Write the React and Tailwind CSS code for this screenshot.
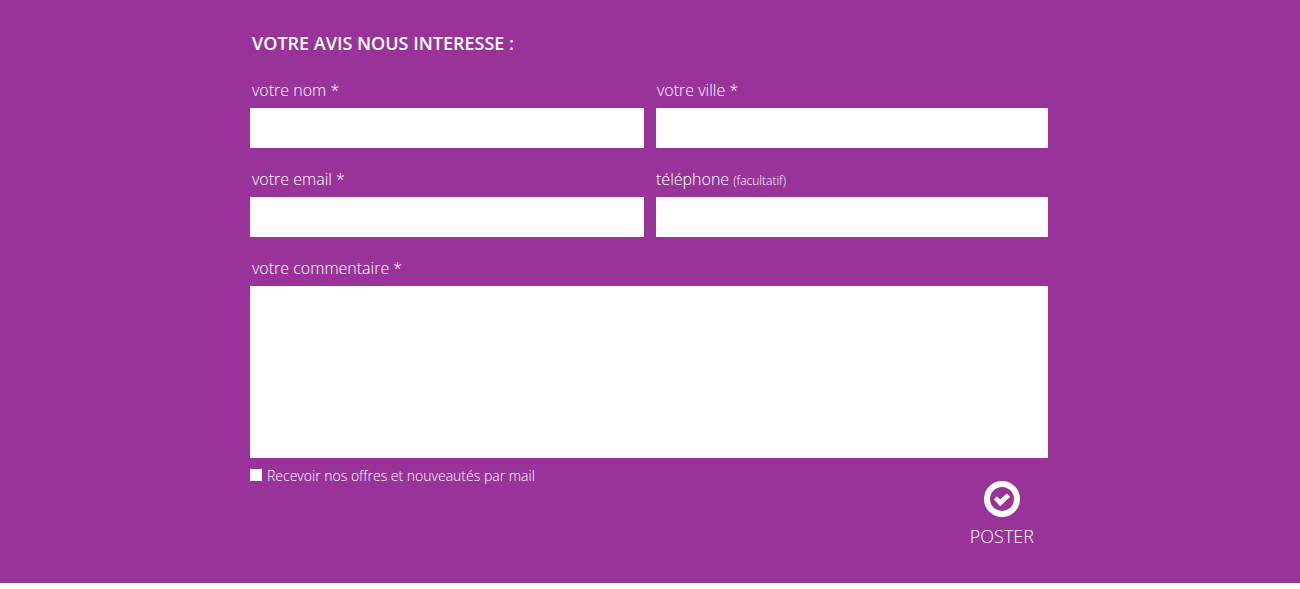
import React from "react";

const labelText = "block text-base leading-6 font-light";
const fieldClass = "mt-1.5 block h-10 w-full bg-white px-2 text-gray-800 outline-none";

function Field({ id, label, note, type = "text", inset = "pl-0.5" }) {
  return (
    <div>
      <label htmlFor={id} className={`${labelText} ${inset}`}>
        {label} {note && <span className="text-xs">{note}</span>}
      </label>
      <input id={id} name={id} type={type} className={fieldClass} />
    </div>
  );
}

export default function App() {
  return (
    <main className="bg-[#993399] font-['Open_Sans',sans-serif] text-white">
      <form className="mx-auto w-full max-w-[800px] pt-[31px] pr-0.5 pb-[35px]">
        <h2 className="pl-0.5 text-lg leading-6 font-semibold">VOTRE AVIS NOUS INTERESSE :</h2>
        <div className="mt-[23px] grid grid-cols-[394fr_392fr] gap-x-3 gap-y-[19px]">
          <Field id="nom" label="votre nom *" />
          <Field id="ville" label="votre ville *" inset="pl-px" />
          <Field id="email" label="votre email *" type="email" />
          <Field id="telephone" label="téléphone" note="(facultatif)" type="tel" inset="pl-0" />
        </div>
        <div className="mt-[19px]">
          <label htmlFor="commentaire" className={`${labelText} pl-0.5`}>votre commentaire *</label>
          <textarea
            id="commentaire"
            name="commentaire"
            className="mt-1.5 block h-[172px] w-full resize-none bg-white p-2 text-gray-800 outline-none"
          />
        </div>
        <div className="flex items-start justify-between">
          <label className="mt-2 flex items-start gap-[5px] text-sm leading-5 font-light">
            <input
              type="checkbox"
              name="offres"
              className="mt-[3px] size-3 appearance-none bg-white checked:border-2 checked:border-white checked:bg-[#993399]"
            />
            Recevoir nos offres et nouveautés par mail
          </label>
          <button type="submit" className="mt-[23px] mr-3.5 flex flex-col items-center gap-[7px] text-lg leading-6 font-light">
            <svg viewBox="0 0 36 36" className="size-9" aria-hidden="true">
              <circle cx="18" cy="18" r="15" fill="none" stroke="currentColor" strokeWidth="6" />
              <path
                d="M10.6 18.4L12.8 16.1L16.2 19.3L22.9 13.3L25.3 15.7L16.2 24.3Z"
                fill="currentColor"
                stroke="currentColor"
                strokeWidth="1.2"
                strokeLinejoin="round"
              />
            </svg>
            POSTER
          </button>
        </div>
      </form>
    </main>
  );
}
